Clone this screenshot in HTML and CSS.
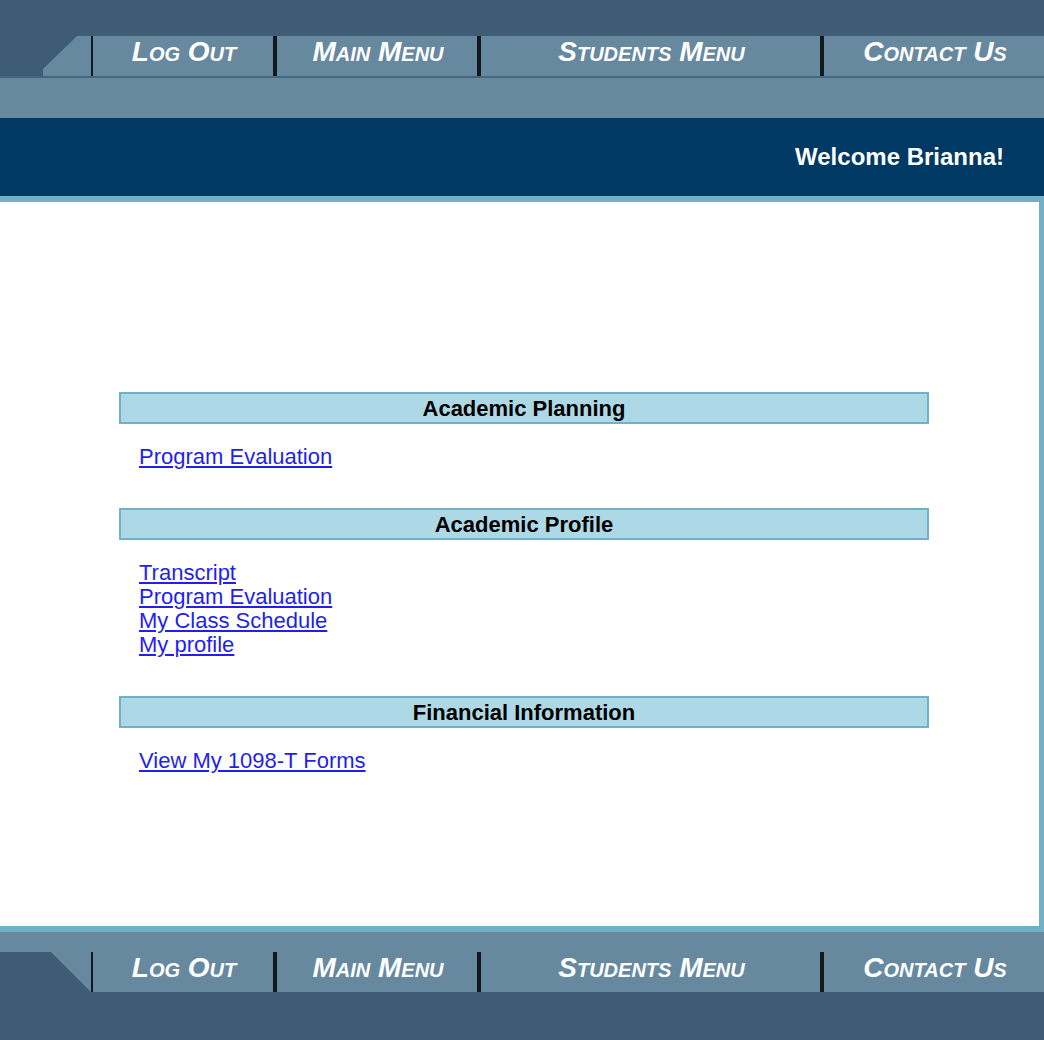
FILE: index.html
```html
<!DOCTYPE html>
<html lang="en">
<head>
<meta charset="utf-8">
<title>Students Menu</title>
<link rel="stylesheet" href="styles.css">
</head>
<body>
<div class="page">
  <header class="top">
    <div class="top-strip"></div>
    <nav class="nav nav-top">
      <div class="corner">
        <svg width="91" height="40" viewBox="0 0 91 40" aria-hidden="true">
          <polygon points="43,40 43,33 77,0 91,0 91,40" fill="#6789a0"/>
        </svg>
      </div>
      <div class="sep sep-thin"></div>
      <a class="nav-item w-logout" href="#">Log Out</a>
      <div class="sep"></div>
      <a class="nav-item w-main" href="#">Main Menu</a>
      <div class="sep"></div>
      <a class="nav-item w-students" href="#">Students Menu</a>
      <div class="sep"></div>
      <a class="nav-item w-contact" href="#">Contact Us</a>
    </nav>
    <div class="nav-line"></div>
    <div class="slate-band"></div>
    <div class="welcome">Welcome Brianna!</div>
  </header>

  <main class="content">
    <section class="section">
      <h2 class="section-title">Academic Planning</h2>
      <ul class="links">
        <li><a href="#">Program Evaluation</a></li>
      </ul>
    </section>
    <section class="section">
      <h2 class="section-title">Academic Profile</h2>
      <ul class="links">
        <li><a href="#">Transcript</a></li>
        <li><a href="#">Program Evaluation</a></li>
        <li><a href="#">My Class Schedule</a></li>
        <li><a href="#">My profile</a></li>
      </ul>
    </section>
    <section class="section">
      <h2 class="section-title">Financial Information</h2>
      <ul class="links">
        <li><a href="#">View My 1098-T Forms</a></li>
      </ul>
    </section>
  </main>

  <footer class="bottom">
    <div class="slate-band-sm"></div>
    <nav class="nav nav-bottom">
      <div class="corner">
        <svg width="91" height="40" viewBox="0 0 91 40" aria-hidden="true">
          <polygon points="0,0 51,0 91,40 0,40" fill="#3e5c76"/>
        </svg>
      </div>
      <div class="sep sep-thin"></div>
      <a class="nav-item w-logout" href="#">Log Out</a>
      <div class="sep"></div>
      <a class="nav-item w-main" href="#">Main Menu</a>
      <div class="sep"></div>
      <a class="nav-item w-students" href="#">Students Menu</a>
      <div class="sep"></div>
      <a class="nav-item w-contact" href="#">Contact Us</a>
    </nav>
    <div class="bottom-strip"></div>
  </footer>
</div>
</body>
</html>
```

FILE: styles.css
```css
html, body {
  margin: 0;
  padding: 0;
  background: #3e5c76;
}

body {
  font-family: "Liberation Sans", Arial, sans-serif;
}

.page {
  width: 1044px;
}

.top-strip {
  height: 36px;
  background: #3e5c76;
}

.nav {
  display: flex;
  height: 40px;
}

.nav-top {
  background: #3e5c76;
}

.nav-bottom {
  background: #6789a0;
}

.corner {
  width: 91px;
  height: 40px;
  flex: none;
}

.corner svg {
  display: block;
}

.sep {
  width: 4px;
  flex: none;
  background: #12181e;
}

.sep-thin {
  width: 2px;
}

.nav-item {
  flex: none;
  background: #6789a0;
  color: #ffffff;
  text-decoration: none;
  font-family: "Liberation Sans", Arial, sans-serif;
  font-weight: bold;
  font-style: italic;
  font-variant: small-caps;
  font-size: 28px;
  line-height: 32px;
  height: 40px;
  text-align: center;
  padding-left: 2px;
  box-sizing: border-box;
}

.w-logout { width: 180px; }
.w-main { width: 200px; }
.w-students { width: 339px; }
.w-contact { width: 220px; }

.nav-line {
  height: 2px;
  background: #46657e;
}

.slate-band {
  height: 40px;
  background: #6789a0;
}

.welcome {
  height: 78px;
  line-height: 78px;
  background: #003963;
  color: #ffffff;
  font-weight: bold;
  font-size: 24px;
  text-align: right;
  padding-right: 40px;
}

.content {
  background: #ffffff;
  border-top: 6px solid #70b1c7;
  border-right: 5px solid #70b1c7;
  border-bottom: 6px solid #70b1c7;
  padding: 190px 0 114px;
}

.section-title {
  margin: 0 0 0 119px;
  width: 810px;
  box-sizing: border-box;
  height: 32px;
  border: 2px solid #70b1c7;
  background: #add8e6;
  color: #000000;
  font-size: 22px;
  font-weight: bold;
  text-align: center;
  line-height: 26px;
  padding-top: 2px;
}

.links {
  list-style: none;
  margin: 0 0 39px;
  padding: 21px 0 0 139px;
}

.links li {
  font-size: 22px;
  line-height: 24px;
}

.links a {
  color: #1f1fee;
  text-decoration: underline;
}

.slate-band-sm {
  height: 20px;
  background: #6789a0;
}

.bottom-strip {
  height: 48px;
  background: #3e5c76;
}
```
